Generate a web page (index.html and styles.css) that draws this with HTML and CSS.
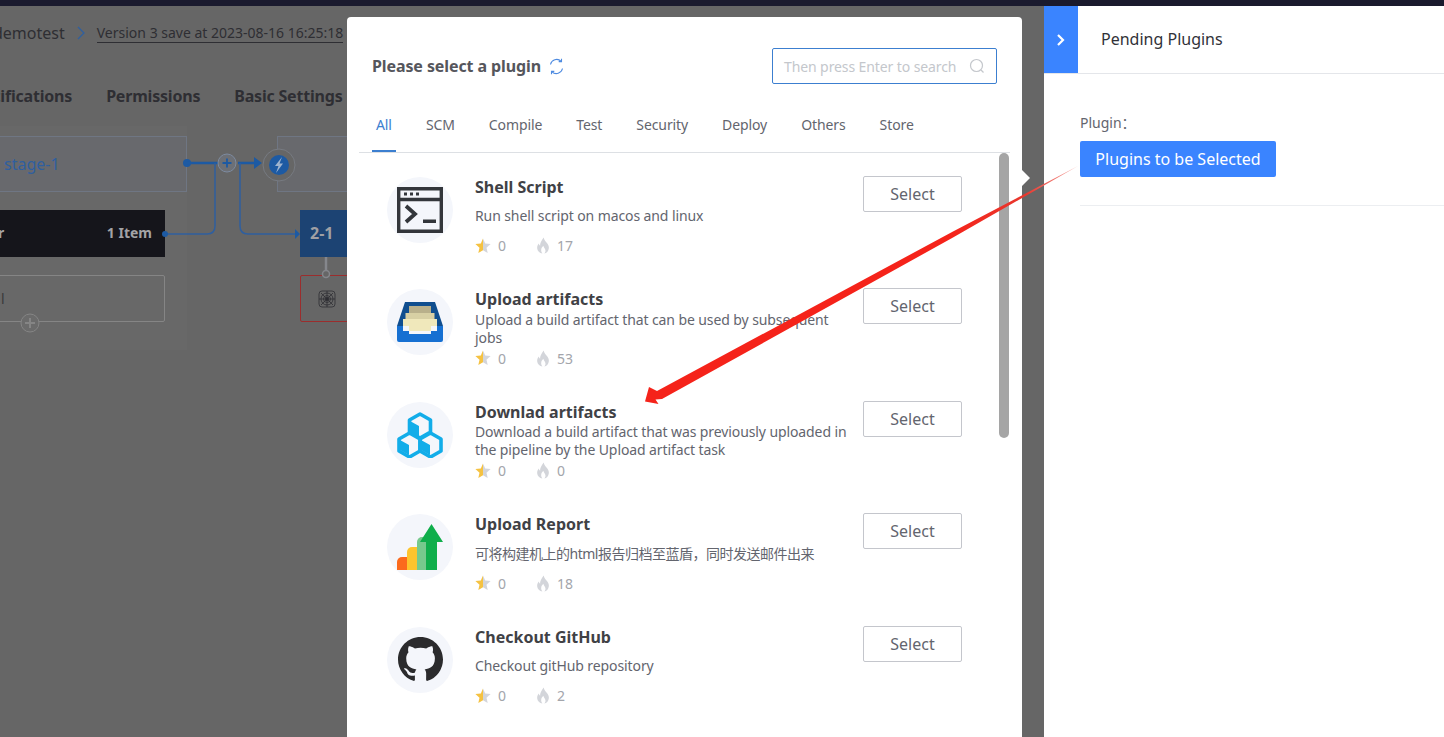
FILE: index.html
```html
<!DOCTYPE html>
<html lang="en">
<head>
    <meta charset="UTF-8">
    <meta name="viewport" content="width=device-width, initial-scale=1.0">
    <title>Please select a plugin</title>
    <link rel="stylesheet" href="styles.css">
</head>
<body>
    <svg class="defs" width="0" height="0">
        <defs>
            <linearGradient id="star-fill" x1="0" y1="0" x2="1" y2="0">
                <stop offset="0.5" stop-color="#f5c242"/>
                <stop offset="0.5" stop-color="#d3d5da"/>
            </linearGradient>
            <linearGradient id="arrow-fill" x1="1078" y1="166" x2="645" y2="402" gradientUnits="userSpaceOnUse">
                <stop offset="0" stop-color="#f7a9a4"/>
                <stop offset="0.12" stop-color="#e8382e"/>
                <stop offset="0.3" stop-color="#f5231a"/>
            </linearGradient>
        </defs>
        <symbol id="star" viewBox="0 0 16 16">
            <path fill="url(#star-fill)" d="M8 .6l2.2 5 5.4.5-4.1 3.6 1.2 5.3L8 12.2 3.3 15l1.2-5.3L.4 6.1l5.4-.5z"/>
        </symbol>
        <symbol id="flame" viewBox="2 0 12 16">
            <path fill="#d3d5da" d="M8.600.5c.5 2.600 2 3.700 3.300 5.400 1.200 1.500 1.800 3 1.600 4.700-.3 2.800-2.200 4.700-4.300 4.900 1.200-1 1.500-2.700.7-4.200-.5-1-1.300-1.700-1.500-3-.9 1-1.700 1.900-2 3-.4 1.600.2 3.200 1 4.200-2.500-.3-4.700-2.300-4.900-5-.1-1.800.6-3.200 1.500-4.300.2 1 .6 1.600 1.300 2C4.900 6 6.600 3.600 8.600.5z"/>
        </symbol>
    </svg>

    <div class="top-bar"></div>

    <div class="stage">
        <!-- page behind the dialog -->
        <div class="crumbs">
            <span class="crumb-name">demotest</span>
            <svg class="crumb-arrow" width="9" height="14" viewBox="0 0 9 14"><path d="M1 1l6 6-6 6" fill="none" stroke="#2f5f9f" stroke-width="1.300"/></svg>
            <span class="crumb-version">Version 3 save at 2023-08-16 16:25:18</span>
        </div>
        <div class="page-tabs">
            <span>Notifications</span>
            <span>Permissions</span>
            <span>Basic Settings</span>
        </div>

        <div class="canvas">
            <div class="stage-column"></div>
            <div class="stage-box stage-one">stage-1</div>
            <div class="stage-box stage-two"></div>
            <div class="job-bar"><span>r</span><span>1 Item</span></div>
            <div class="task-box">l</div>
            <div class="job-num">2-1</div>
            <div class="task-box-red">
                <svg width="18" height="18" viewBox="0 0 18 18" fill="none" stroke="#2e2e33" stroke-width="0.800">
                    <rect x="1" y="1" width="16" height="16" rx="3"/>
                    <circle cx="9" cy="9" r="6"/>
                    <circle cx="9" cy="9" r="3.500"/>
                    <circle cx="9" cy="9" r="1.500" fill="#2e2e33"/>
                    <path d="M3 3l12 12M15 3L3 15M9 1v16M1 9h16"/>
                </svg>
            </div>
            <svg class="wires" width="360" height="300" viewBox="0 126 360 300" fill="none">
                <circle cx="187" cy="163" r="4" fill="#1d5aa3"/>
                <path d="M187 163h31M238 163h17" stroke="#1d5aa3" stroke-width="2.500"/>
                <path d="M254 157l8 6-8 6z" fill="#1d5aa3"/>
                <path d="M165 234h42q8 0 8-8v-63M240 163v63q0 8 8 8h47" stroke="#2f5f9f" stroke-width="1.500"/>
                <circle cx="165" cy="234" r="3" fill="#1d5aa3"/>
                <path d="M295 229l5 5-5 5z" fill="#1d5aa3"/>
                <circle cx="227" cy="163" r="9" fill="#6d7076" stroke="#7d8ba0"/>
                <path d="M222.500 163h9M227 158.500v9" stroke="#1d5aa3" stroke-width="1.800"/>
                <circle cx="279" cy="165" r="16" fill="#666" stroke="#777b82"/>
                <circle cx="279" cy="165" r="10" fill="#1d5aa3"/>
                <path d="M282 157l-7 9h3.500l-2.500 7 7-9.500h-3.500z" fill="#9fb4cf"/>
                <path d="M326 257v14" stroke="#85878c" stroke-width="2.500"/>
                <circle cx="326" cy="274" r="3.500" fill="#666" stroke="#85878c" stroke-width="1.500"/>
                <circle cx="30" cy="323" r="9" fill="#6b6b6b" stroke="#858585"/>
                <path d="M25 323h10M30 318v10" stroke="#858585" stroke-width="2"/>
            </svg>
        </div>

        <div class="modal">
            <div class="modal-head">
                <div class="modal-title">
                    <span>Please select a plugin</span>
                    <svg width="17" height="17" viewBox="0 0 17 17" fill="none" stroke="#4d8ae0" stroke-width="1.100">
                        <path d="M2.500 6.500A6.300 6.300 0 0 1 13 3.200M14.500 10.500A6.300 6.300 0 0 1 4 13.800"/>
                        <path d="M13.500 .8V3.600H10.700M3.500 16.200V13.400H6.300"/>
                    </svg>
                </div>
                <label class="search">
                    <span class="search-hint">Then press Enter to search</span>
                    <svg width="16" height="16" viewBox="0 0 16 16" fill="none" stroke="#c4c7cc" stroke-width="1.200">
                        <circle cx="7.500" cy="7.500" r="6"/>
                        <path d="M12 12l2.500 2.500"/>
                    </svg>
                </label>
            </div>

            <div class="modal-tabs">
                <span class="modal-tab active">All</span>
                <span class="modal-tab">SCM</span>
                <span class="modal-tab">Compile</span>
                <span class="modal-tab">Test</span>
                <span class="modal-tab">Security</span>
                <span class="modal-tab">Deploy</span>
                <span class="modal-tab">Others</span>
                <span class="modal-tab">Store</span>
            </div>

            <div class="plugin-list">
                <div class="plugin">
                    <div class="plugin-icon">
                        <svg width="46" height="46" viewBox="0 0 46 46">
                            <path fill="none" stroke="#33363b" stroke-width="3.400" d="M1.700 1.700h42.600v42.600H1.700zM1.700 12.500h42.600"/>
                            <path fill="#33363b" d="M7 5.500h3v3H7zM13 5.500h3v3h-3zM19 5.500h3v3h-3zM26 32.500h13v3.500H26z"/>
                            <path fill="none" stroke="#33363b" stroke-width="3.800" d="M9 19l9 8-9 8"/>
                        </svg>
                    </div>
                    <div class="plugin-info">
                        <div class="plugin-name">Shell Script</div>
                        <div class="plugin-desc">Run shell script on macos and linux</div>
                        <div class="plugin-stats">
                            <span class="stat"><svg><use href="#star"/></svg>0</span>
                            <span class="stat"><svg><use href="#flame"/></svg>17</span>
                        </div>
                    </div>
                    <button class="select-btn">Select</button>
                </div>

                <div class="plugin">
                    <div class="plugin-icon">
                        <svg width="46" height="40" viewBox="0 0 46 40">
                            <path fill="#104e8f" d="M8 0h30l8 24H0z"/>
                            <path fill="#b9b08b" d="M12 4h22v8H12z"/>
                            <path fill="#d8d0a4" d="M8.500 11h29v8h-29z"/>
                            <path fill="#f0e8bb" d="M6 17h34v7h-6v5H12v-5H6z"/>
                            <path fill="#1670d2" d="M0 24h6v5h6v3h22v-3h6v-5h6v14a2 2 0 0 1-2 2H2a2 2 0 0 1-2-2z"/>
                        </svg>
                    </div>
                    <div class="plugin-info">
                        <div class="plugin-name">Upload artifacts</div>
                        <div class="plugin-desc">Upload a build artifact that can be used by subsequent jobs</div>
                        <div class="plugin-stats">
                            <span class="stat"><svg><use href="#star"/></svg>0</span>
                            <span class="stat"><svg><use href="#flame"/></svg>53</span>
                        </div>
                    </div>
                    <button class="select-btn">Select</button>
                </div>

                <div class="plugin">
                    <div class="plugin-icon">
                        <svg width="46" height="46" viewBox="0 0 46 46" fill="none" stroke="#12ade9" stroke-width="3.600" stroke-linejoin="round">
                            <path d="M23 2l10.500 6v12L23 26l-10.500-6V8z"/>
                            <path d="M12.500 21L23 27v12l-10.500 6L2 39V27z"/>
                            <path d="M33.500 21L44 27v12l-10.500 6L23 39V27z"/>
                            <path fill="#12ade9" stroke="none" d="M13 9l9 5v11l-9-5zM3 28l9 5v10l-9-5zM24 28l9 5v10l-9-5z"/>
                        </svg>
                    </div>
                    <div class="plugin-info">
                        <div class="plugin-name">Downlad artifacts</div>
                        <div class="plugin-desc">Download a build artifact that was previously uploaded in the pipeline by the Upload artifact task</div>
                        <div class="plugin-stats">
                            <span class="stat"><svg><use href="#star"/></svg>0</span>
                            <span class="stat"><svg><use href="#flame"/></svg>0</span>
                        </div>
                    </div>
                    <button class="select-btn">Select</button>
                </div>

                <div class="plugin">
                    <div class="plugin-icon">
                        <svg width="46" height="46" viewBox="0 0 46 46">
                            <path fill="#fb6a1d" d="M0 46V38a5 5 0 0 1 5-5h5v13z"/>
                            <path fill="#fdc42d" d="M10 46V28a5 5 0 0 1 5-5h5v23z"/>
                            <path fill="#76c98c" d="M20 46V18a5 5 0 0 1 5-5h5v33z"/>
                            <path fill="#0fae4b" d="M29 46V18h-6L34.500 0 46 18h-6v28z"/>
                        </svg>
                    </div>
                    <div class="plugin-info">
                        <div class="plugin-name">Upload Report</div>
                        <div class="plugin-desc cjk">可将构建机上的html报告归档至蓝盾，同时发送邮件出来</div>
                        <div class="plugin-stats">
                            <span class="stat"><svg><use href="#star"/></svg>0</span>
                            <span class="stat"><svg><use href="#flame"/></svg>18</span>
                        </div>
                    </div>
                    <button class="select-btn">Select</button>
                </div>

                <div class="plugin">
                    <div class="plugin-icon">
                        <svg width="45" height="45" viewBox="0 0 16 16">
                            <path fill="#2b2b2d" d="M8 0C3.580 0 0 3.580 0 8c0 3.540 2.290 6.530 5.470 7.590.4.070.55-.17.55-.38 0-.19-.01-.82-.01-1.490-2.010.37-2.530-.49-2.690-.94-.09-.23-.48-.94-.82-1.130-.28-.15-.68-.52-.01-.53.63-.01 1.080.58 1.230.82.72 1.210 1.870.87 2.330.66.070-.52.28-.87.51-1.070-1.780-.2-3.640-.89-3.640-3.950 0-.87.31-1.590.82-2.150-.08-.2-.36-1.020.08-2.120 0 0 .67-.21 2.200.82.64-.18 1.320-.27 2-.27.68 0 1.360.09 2 .27 1.530-1.040 2.200-.82 2.200-.82.44 1.100.16 1.920.08 2.120.51.56.82 1.270.82 2.150 0 3.070-1.870 3.750-3.650 3.950.29.25.54.73.54 1.480 0 1.070-.01 1.930-.01 2.200 0 .21.15.46.55.38A8.013 8.013 0 0 0 16 8c0-4.420-3.580-8-8-8z"/>
                        </svg>
                    </div>
                    <div class="plugin-info">
                        <div class="plugin-name">Checkout GitHub</div>
                        <div class="plugin-desc">Checkout gitHub repository</div>
                        <div class="plugin-stats">
                            <span class="stat"><svg><use href="#star"/></svg>0</span>
                            <span class="stat"><svg><use href="#flame"/></svg>2</span>
                        </div>
                    </div>
                    <button class="select-btn">Select</button>
                </div>

                <div class="scroll-thumb"></div>
            </div>
        </div>
        <div class="modal-pointer"></div>

        <div class="drawer">
            <div class="drawer-head">
                <div class="drawer-toggle">
                    <svg width="10" height="14" viewBox="0 0 10 14"><path d="M2 2l5 5-5 5" fill="none" stroke="#fff" stroke-width="2.200"/></svg>
                </div>
                <div class="drawer-title">Pending Plugins</div>
            </div>
            <div class="drawer-body">
                <div class="field-label">Plugin：</div>
                <button class="pick-btn">Plugins to be Selected</button>
            </div>
        </div>
    </div>

    <!-- annotation arrow drawn on top of the screenshot -->
    <svg class="annotation" width="1444" height="737" viewBox="0 0 1444 737">
        <path fill="url(#arrow-fill)" d="M1078 166L953 231.500 657 391l-8-4-4 14.500 13.500 2.500-3-4.500L662 399 953 237.500z"/>
    </svg>
</body>
</html>
```
FILE: styles.css
```css
body {
    margin: 0;
    height: 100vh;
    overflow: hidden;
    display: flex;
    flex-direction: column;
    background-color: #666;
    font-family: "Noto Sans", "Noto Sans CJK SC", sans-serif;
    font-size: 14px;
}

.defs {
    position: absolute;
}

.top-bar {
    height: 6px;
    flex: none;
    background-color: #1a1a2e;
}

.stage {
    flex: 1;
    position: relative;
    overflow: hidden;
}

/* Dimmed page behind the dialog */
.crumbs {
    height: 54px;
    margin-left: -7px;
    display: flex;
    align-items: center;
    color: #2e2e33;
    white-space: nowrap;
}

.crumb-name {
    font-size: 16px;
}

.crumb-arrow {
    margin: 0 11px 0 12px;
}

.crumb-version {
    border-bottom: 1px solid #2e2e33;
    line-height: 19px;
}

.page-tabs {
    height: 72px;
    margin-left: -29px;
    display: flex;
    align-items: center;
    gap: 34px;
    font-size: 16px;
    font-weight: 700;
    letter-spacing: -0.2px;
    color: #2e2e33;
    white-space: nowrap;
}

.canvas {
    position: relative;
    margin-top: -6px;
}

.stage-column {
    position: absolute;
    left: 0;
    top: 0;
    width: 187px;
    height: 224px;
    background-color: #686868;
}

.stage-box {
    position: absolute;
    top: 10px;
    height: 56px;
    box-sizing: border-box;
    border: 1px solid #6f7683;
    background-color: #68696d;
    display: flex;
    align-items: center;
}

.stage-one {
    left: -20px;
    width: 207px;
    padding-left: 23px;
    font-size: 16px;
    color: #2f5f9f;
}

.stage-two {
    left: 277px;
    width: 100px;
}

.job-bar {
    position: absolute;
    left: -2px;
    top: 84px;
    width: 167px;
    height: 47px;
    box-sizing: border-box;
    padding: 0 13px 2px 0;
    background-color: #15151b;
    color: #a3a3a6;
    font-weight: 700;
    display: flex;
    align-items: center;
    justify-content: space-between;
}

.task-box {
    position: absolute;
    left: -20px;
    top: 149px;
    width: 185px;
    height: 47px;
    box-sizing: border-box;
    padding-left: 20px;
    border: 1px solid #858585;
    border-radius: 2px;
    color: #3a3a3a;
    line-height: 45px;
}

.job-num {
    position: absolute;
    left: 300px;
    top: 84px;
    width: 60px;
    height: 47px;
    padding-left: 10px;
    box-sizing: border-box;
    background-color: #1c4373;
    color: #a0a0a4;
    font-size: 16px;
    font-weight: 700;
    line-height: 47px;
}

.task-box-red {
    position: absolute;
    left: 300px;
    top: 149px;
    width: 60px;
    height: 47px;
    padding: 14px 0 0 17px;
    box-sizing: border-box;
    border: 1px solid #9b2d2d;
    border-radius: 2px;
}

.wires {
    position: absolute;
    left: 0;
    top: 0;
}

/* Plugin dialog */
.modal {
    position: absolute;
    left: 347px;
    top: 11px;
    bottom: 0;
    width: 675px;
    box-sizing: border-box;
    padding-top: 31px;
    background-color: #fff;
    border-radius: 4px 4px 0 0;
    display: flex;
    flex-direction: column;
}

.modal-pointer {
    position: absolute;
    left: 1022px;
    top: 164px;
    border: 8px solid transparent;
    border-left-color: #fff;
    border-right-width: 0;
}

.modal-head {
    display: flex;
    align-items: center;
    justify-content: space-between;
    padding: 0 25px;
}

.modal-title {
    display: flex;
    align-items: center;
    gap: 7px;
    font-size: 16px;
    font-weight: 700;
    letter-spacing: -0.1px;
    color: #55565c;
}

.search {
    width: 225px;
    height: 36px;
    box-sizing: border-box;
    border: 1px solid #3c7fd0;
    border-radius: 2px;
    padding: 0 11px;
    display: flex;
    align-items: center;
    justify-content: space-between;
}

.search-hint {
    color: #c4c7cc;
    letter-spacing: -0.1px;
    white-space: nowrap;
}

.modal-tabs {
    height: 46px;
    margin: 22px 12px 0;
    padding-left: 13px;
    display: flex;
    gap: 26px;
    border-bottom: 1px solid #dde0e4;
    letter-spacing: -0.1px;
}

.modal-tab {
    height: 46px;
    box-sizing: border-box;
    padding: 0 4px;
    line-height: 38px;
    color: #63656e;
    white-space: nowrap;
}

.modal-tab.active {
    color: #3c7fd0;
    border-bottom: 2px solid #3c7fd0;
}

.plugin-list {
    flex: 1;
    position: relative;
    overflow: hidden;
    padding: 22.75px 60px 0 40px;
    display: grid;
    grid-auto-rows: 112.5px;
}

.plugin {
    display: flex;
    align-items: flex-start;
}

.plugin-icon {
    width: 66px;
    height: 66px;
    margin-top: 1px;
    flex: none;
    border-radius: 50%;
    background-color: #f4f6fb;
    display: flex;
    align-items: center;
    justify-content: center;
}

.plugin-info {
    width: 375px;
    margin: 0 13px 0 22px;
    flex: none;
}

.plugin-name {
    height: 22px;
    line-height: 22px;
    font-size: 16px;
    font-weight: 700;
    color: #404145;
}

.plugin-desc {
    height: 36px;
    margin-top: 0.25px;
    display: flex;
    align-items: center;
    line-height: 18px;
    letter-spacing: -0.1px;
    color: #63656e;
}

.plugin-desc.cjk {
    letter-spacing: -0.5px;
}

.plugin-stats {
    height: 22px;
    margin-top: 0.75px;
    display: flex;
    align-items: center;
    color: #a3a5ab;
}

.stat {
    width: 61px;
    display: flex;
    align-items: center;
    gap: 7px;
}

.stat svg {
    width: 16px;
    height: 16px;
}

.stat + .stat svg {
    width: 14px;
    height: 17px;
}

.select-btn {
    width: 99px;
    height: 36px;
    flex: none;
    padding: 0;
    background-color: #fff;
    border: 1px solid #c4c6cc;
    border-radius: 2px;
    font-family: inherit;
    font-size: 16px;
    color: #63656e;
}

.scroll-thumb {
    position: absolute;
    left: 652px;
    top: 0;
    width: 10px;
    height: 285px;
    border-radius: 5px;
    background-color: #a5a5a5;
}

/* Right side drawer */
.drawer {
    position: absolute;
    top: 0;
    right: 0;
    bottom: 0;
    width: 400px;
    background-color: #fff;
}

.drawer-head {
    height: 67px;
    display: flex;
    border-bottom: 1px solid #e4e6ea;
}

.drawer-toggle {
    width: 34px;
    background-color: #3a84ff;
    display: flex;
    align-items: center;
    justify-content: center;
}

.drawer-title {
    margin-left: 23px;
    line-height: 66px;
    font-size: 16px;
    color: #313238;
}

.drawer-body {
    margin-left: 36px;
    padding: 38px 0 28px;
    border-bottom: 1px solid #eceef1;
}

.field-label {
    line-height: 22px;
    color: #63656e;
}

.pick-btn {
    display: block;
    width: 196px;
    height: 36px;
    margin-top: 7px;
    padding: 0;
    border: none;
    border-radius: 2px;
    background-color: #3a84ff;
    font-family: inherit;
    font-size: 16px;
    color: #fff;
}

.annotation {
    position: absolute;
    left: 0;
    top: 0;
    pointer-events: none;
}
```
